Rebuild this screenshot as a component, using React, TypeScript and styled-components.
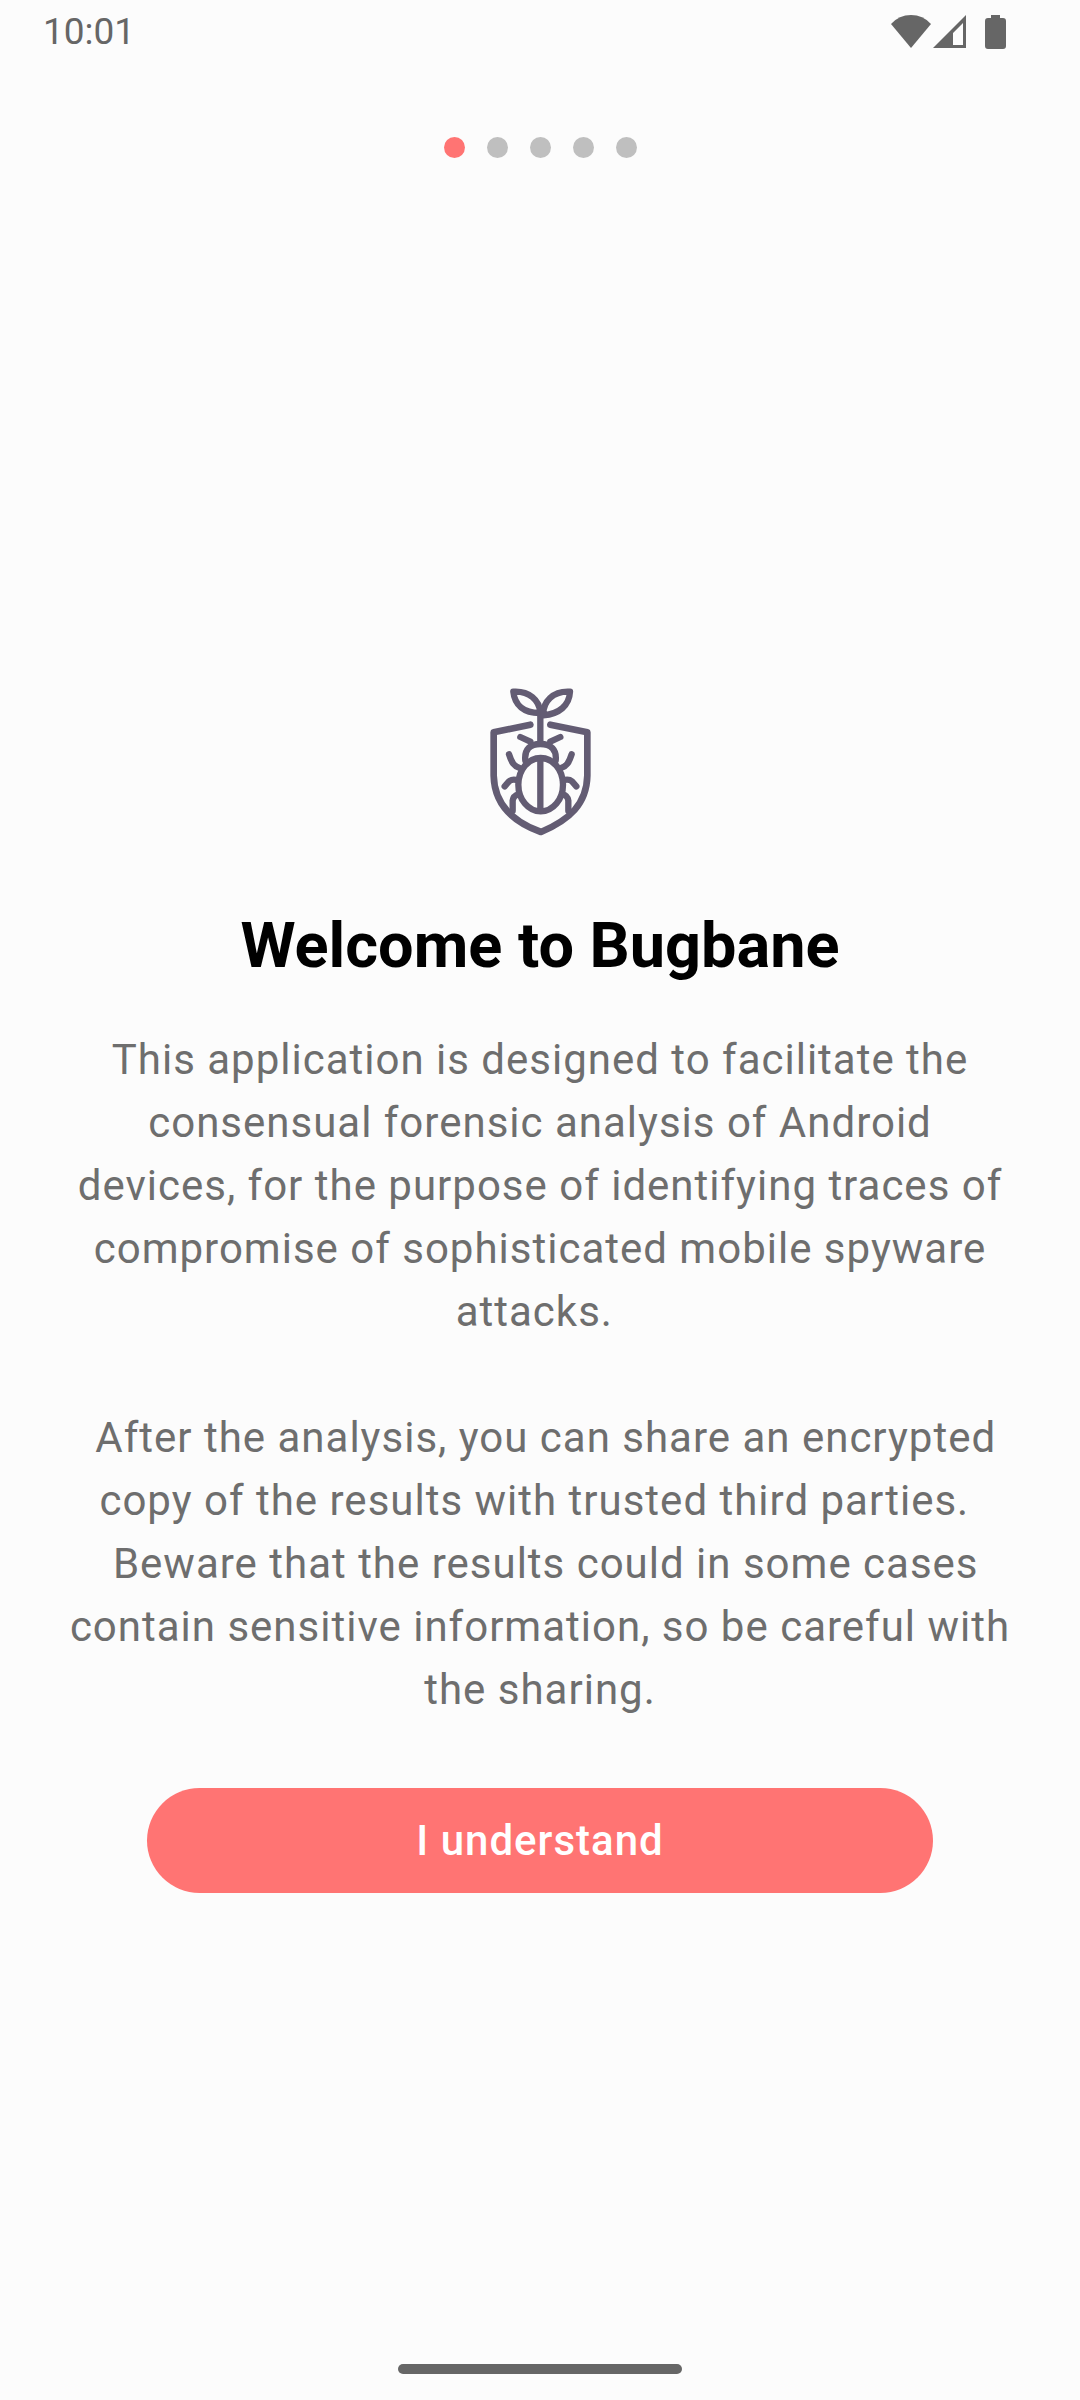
import React from "react";
import styled, { createGlobalStyle } from "styled-components";

const GlobalStyle = createGlobalStyle`
  *, *::before, *::after {
    box-sizing: border-box;
  }

  body {
    margin: 0;
    background: #fcfcfc;
    font-family: Roboto, "Liberation Sans", sans-serif;
  }
`;

const Screen = styled.div`
  display: flex;
  flex-direction: column;
  min-height: 100vh;
  background: #fcfcfc;
`;

const StatusBar = styled.header`
  display: flex;
  align-items: center;
  justify-content: space-between;
  height: 63px;
  padding: 0 74px 0 43px;
  color: #666666;
`;

const Clock = styled.time`
  font-size: 37px;
  line-height: 63px;
`;

const StatusIcons = styled.div`
  display: flex;
  align-items: center;

  svg {
    display: block;
    fill: currentColor;
  }
`;

const WifiIcon = styled.svg`
  width: 40px;
  height: 34px;
`;

const SignalIcon = styled.svg`
  width: 34px;
  height: 34px;
  margin-left: 2px;
`;

const BatteryIcon = styled.svg`
  width: 21px;
  height: 34px;
  margin-left: 18px;
`;

const Steps = styled.ol`
  display: flex;
  justify-content: center;
  gap: 22px;
  margin: 0;
  padding: 74px 0 58px;
  list-style: none;
`;

const Step = styled.li<{ $active?: boolean }>`
  width: 21px;
  height: 21px;
  border-radius: 50%;
  background: ${({ $active }) => ($active ? "#ff7473" : "#bfbfbf")};
`;

const Main = styled.main`
  display: flex;
  flex: 1;
  flex-direction: column;
  align-items: center;
  justify-content: center;
  padding: 0 65px;
`;

const Logo = styled.svg`
  display: block;
  width: 101px;
  height: 148px;
  fill: none;
  stroke: #635c73;
  stroke-width: 19;
  stroke-linecap: round;
  stroke-linejoin: round;
`;

const Title = styled.h1`
  margin: 68px 0 40px;
  color: #000000;
  font-size: 63px;
  font-weight: 700;
  line-height: 84px;
  text-align: center;
`;

const Description = styled.div`
  display: flex;
  flex-direction: column;
  gap: 63px;
  color: #6e6e6e;
  font-size: 42px;
  letter-spacing: 1px;
  line-height: 63px;
  text-align: center;

  p {
    margin: 0;
  }
`;

const PrimaryButton = styled.button`
  align-self: stretch;
  height: 105px;
  margin: 67px 82px 0;
  border: 0;
  border-radius: 53px;
  background: #ff7473;
  color: #ffffff;
  font-family: inherit;
  font-size: 42px;
  font-weight: 500;
  letter-spacing: 1px;
  cursor: pointer;
`;

const NavigationBar = styled.footer`
  display: flex;
  justify-content: center;
  height: 36px;
`;

const HomeHandle = styled.div`
  width: 284px;
  height: 10px;
  border-radius: 5px;
  background: #666666;
`;

const STEP_COUNT = 5;
const CURRENT_STEP = 0;

function BugbaneLogo() {
  return (
    <Logo viewBox="60 52 303 444" role="img" aria-label="Bugbane">
      <path
        strokeWidth="20"
        d="M181 162 71 185V315C73 400 127 453 213 484C299 447 350 400 352 315V185L241 162"
      />
      <path d="M211 135V218" />
      <path d="M130 63C177 60 209 88 211 127C162 128 134 103 130 63Z" />
      <path d="M300 63C249 60 218 93 220 134C267 130 298 105 300 63Z" />
      <path d="M166 270C162 235 181 220 211 220C243 220 261 237 257 270" />
      <ellipse cx="212" cy="342" rx="67" ry="80" />
      <path d="M211 265V420" />
      <path d="M151 199 181 213M271 199 241 213" />
      <path d="M117 251C125 276 132 287 149 292M305 251C297 276 290 287 273 292" />
      <path d="M104 347 117 332C124 326 134 326 144 329M319 347 306 332C299 326 289 326 279 329" />
      <path d="M128 420V390C129 380 137 373 147 370M295 420V390C294 380 287 373 277 370" />
    </Logo>
  );
}

export default function App() {
  return (
    <>
      <GlobalStyle />
      <Screen>
        <StatusBar>
          <Clock>10:01</Clock>
          <StatusIcons aria-hidden="true">
            <WifiIcon viewBox="0 0 40 34">
              <path d="M0 9Q8 0 20 0T40 9L20 33Z" />
            </WifiIcon>
            <SignalIcon viewBox="0 0 34 34">
              <path fillRule="evenodd" d="M33 0V33H0ZM30 8 20 18V30H30Z" />
            </SignalIcon>
            <BatteryIcon viewBox="0 0 21 34">
              <path d="M6 0H15V3H18Q21 3 21 6V31Q21 34 18 34H3Q0 34 0 31V6Q0 3 3 3H6Z" />
            </BatteryIcon>
          </StatusIcons>
        </StatusBar>

        <Steps aria-label="Setup progress">
          {Array.from({ length: STEP_COUNT }, (_, index) => (
            <Step
              key={index}
              $active={index === CURRENT_STEP}
              aria-current={index === CURRENT_STEP ? "step" : undefined}
            />
          ))}
        </Steps>

        <Main>
          <BugbaneLogo />
          <Title>Welcome to Bugbane</Title>
          <Description>
            <p>
              This application is designed to facilitate the consensual forensic
              analysis of Android devices, for the purpose of identifying traces
              of compromise of sophisticated mobile spyware attacks.{"\u00a0"}
            </p>
            <p>
              {"\u00a0"}After the analysis, you can share an encrypted copy of
              the results with trusted third parties.{"\u00a0"}
              <br />
              {"\u00a0"}Beware that the results could in some cases contain
              sensitive information, so be careful with the sharing.
            </p>
          </Description>
          <PrimaryButton type="button">I understand</PrimaryButton>
        </Main>

        <NavigationBar>
          <HomeHandle />
        </NavigationBar>
      </Screen>
    </>
  );
}
